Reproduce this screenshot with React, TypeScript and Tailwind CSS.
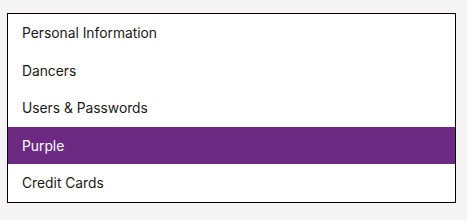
import React from "react";

const items = ["Personal Information", "Dancers", "Users & Passwords", "Purple", "Credit Cards"];

export default function App() {
  return (
    <div className="w-[467px] h-[220px] bg-[#f5f3f3] pt-[13px] pl-[7px]" style={{ fontFamily: "Inter, 'Noto Sans', sans-serif" }}>
      <div className="w-[449px] h-[190px] border border-black bg-white flex flex-col">
        {items.map((it) => (
          <div
            key={it}
            className={
              it === "Purple"
                ? "h-[37.6px] flex items-center pl-[14px] pt-[1px] bg-[#6d2a82] text-white text-[13.8px]"
                : "h-[37.6px] flex items-center pl-[14px] pt-[1px] text-[#1a1a1a] text-[13.8px]"
            }
          >
            {it}
          </div>
        ))}
      </div>
    </div>
  );
}
